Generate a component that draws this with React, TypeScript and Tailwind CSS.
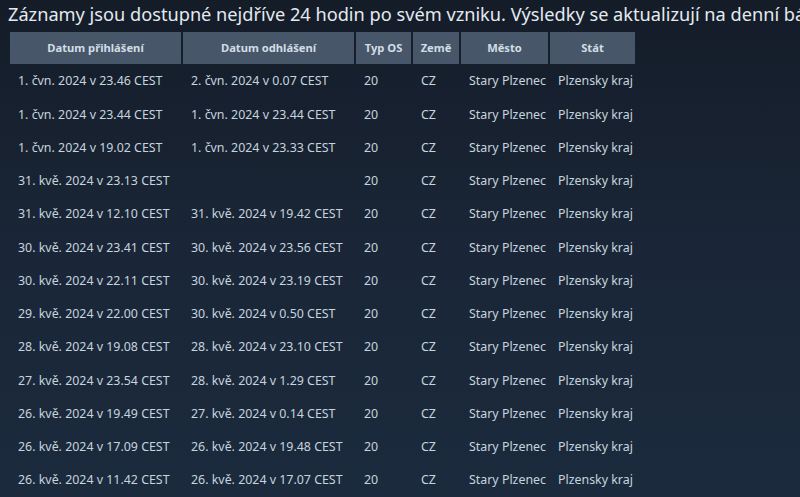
const rows: [string, string, string, string, string, string][] = [
  ['1. čvn. 2024 v 23.46 CEST', '2. čvn. 2024 v 0.07 CEST', '20', 'CZ', 'Stary Plzenec', 'Plzensky kraj'],
  ['1. čvn. 2024 v 23.44 CEST', '1. čvn. 2024 v 23.44 CEST', '20', 'CZ', 'Stary Plzenec', 'Plzensky kraj'],
  ['1. čvn. 2024 v 19.02 CEST', '1. čvn. 2024 v 23.33 CEST', '20', 'CZ', 'Stary Plzenec', 'Plzensky kraj'],
  ['31. kvě. 2024 v 23.13 CEST', '', '20', 'CZ', 'Stary Plzenec', 'Plzensky kraj'],
  ['31. kvě. 2024 v 12.10 CEST', '31. kvě. 2024 v 19.42 CEST', '20', 'CZ', 'Stary Plzenec', 'Plzensky kraj'],
  ['30. kvě. 2024 v 23.41 CEST', '30. kvě. 2024 v 23.56 CEST', '20', 'CZ', 'Stary Plzenec', 'Plzensky kraj'],
  ['30. kvě. 2024 v 22.11 CEST', '30. kvě. 2024 v 23.19 CEST', '20', 'CZ', 'Stary Plzenec', 'Plzensky kraj'],
  ['29. kvě. 2024 v 22.00 CEST', '30. kvě. 2024 v 0.50 CEST', '20', 'CZ', 'Stary Plzenec', 'Plzensky kraj'],
  ['28. kvě. 2024 v 19.08 CEST', '28. kvě. 2024 v 23.10 CEST', '20', 'CZ', 'Stary Plzenec', 'Plzensky kraj'],
  ['27. kvě. 2024 v 23.54 CEST', '28. kvě. 2024 v 1.29 CEST', '20', 'CZ', 'Stary Plzenec', 'Plzensky kraj'],
  ['26. kvě. 2024 v 19.49 CEST', '27. kvě. 2024 v 0.14 CEST', '20', 'CZ', 'Stary Plzenec', 'Plzensky kraj'],
  ['26. kvě. 2024 v 17.09 CEST', '26. kvě. 2024 v 19.48 CEST', '20', 'CZ', 'Stary Plzenec', 'Plzensky kraj'],
  ['26. kvě. 2024 v 11.42 CEST', '26. kvě. 2024 v 17.07 CEST', '20', 'CZ', 'Stary Plzenec', 'Plzensky kraj'],
]

const headers = [
  { label: 'Datum přihlášení', w: 'w-[171px]' },
  { label: 'Datum odhlášení', w: 'w-[171px]' },
  { label: 'Typ OS', w: 'w-[55px]' },
  { label: 'Země', w: 'w-[46px]' },
  { label: 'Město', w: 'w-[87px]' },
  { label: 'Stát', w: 'w-[85px]' },
]

export default function App() {
  return (
    <div className="w-[800px] h-[497px] overflow-hidden bg-gradient-to-b from-[#141c28] via-[#1a2637] to-[#1b2a3d] font-['Noto_Sans','Liberation_Sans',sans-serif] text-[#c6d4df]">
      <div className="pl-2 pt-[1px]">
        {/* text runs past the right edge, as in the page */}
        <p className="whitespace-nowrap text-[18.2px] leading-[26px] text-[#e3eaf0]">
          Záznamy jsou dostupné nejdříve 24 hodin po svém vzniku. Výsledky se aktualizují na denní bázi.
        </p>
        <table className="mt-[3px] border-separate border-spacing-[2px] text-[12.4px]">
          <thead>
            <tr>
              {headers.map((h) => (
                <th
                  key={h.label}
                  className={`${h.w} h-[32px] bg-[#475769] text-center text-[11.2px] font-bold text-[#d3dde6] px-1`}
                >
                  {h.label}
                </th>
              ))}
            </tr>
          </thead>
          <tbody>
            {rows.map((r, i) => (
              <tr key={i}>
                {r.map((c, j) => (
                  <td key={j} className="h-[31.25px] whitespace-nowrap pl-2 pr-0 text-left text-[#c6d4df]">
                    {c}
                  </td>
                ))}
              </tr>
            ))}
          </tbody>
        </table>
      </div>
    </div>
  )
}
